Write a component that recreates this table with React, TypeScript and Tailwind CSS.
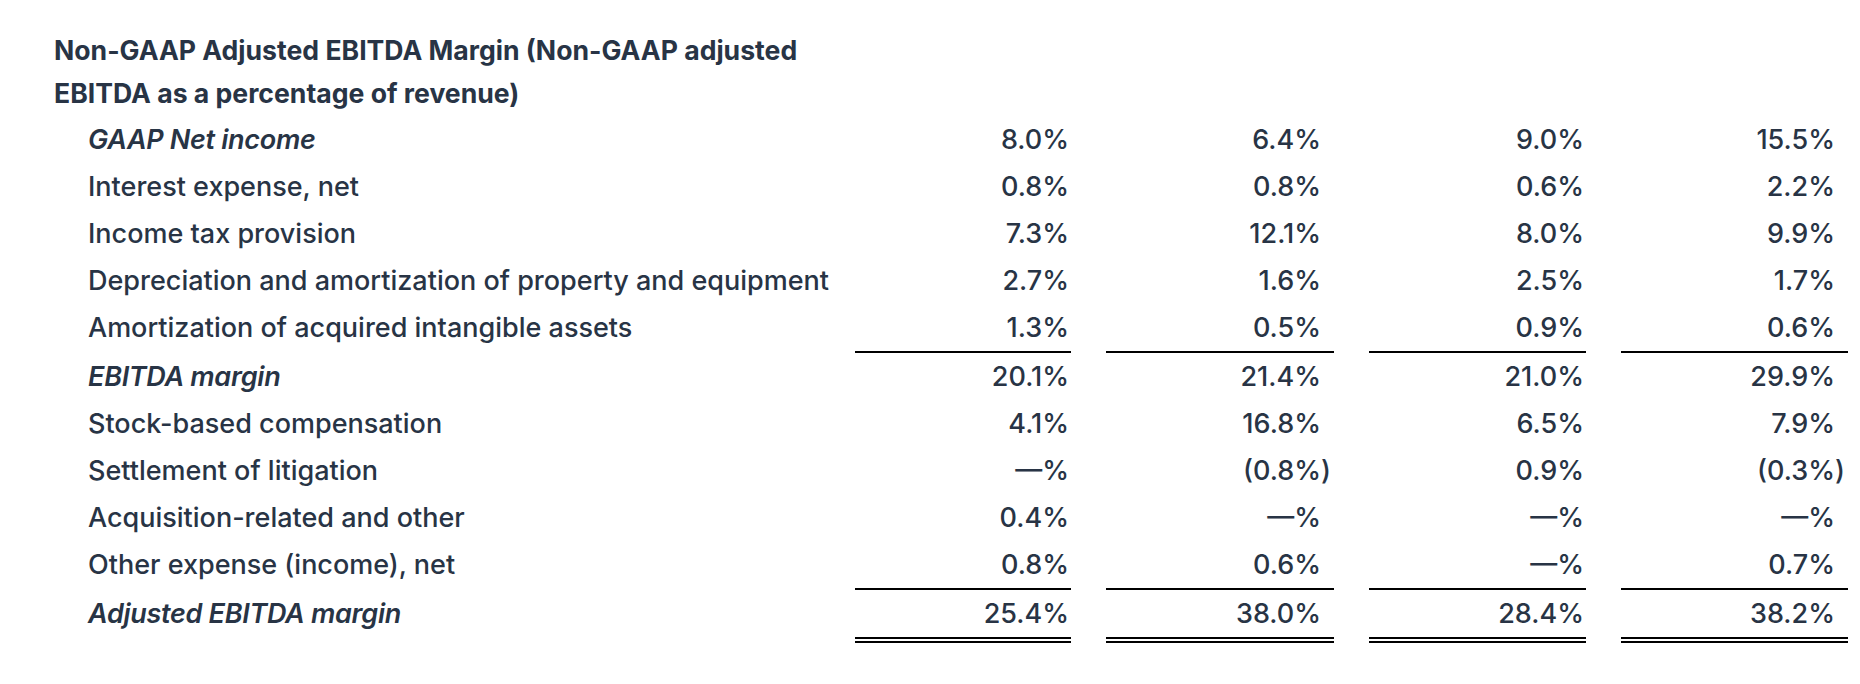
type Row = {
  label: string
  strong?: boolean
  ruled?: boolean
  doubled?: boolean
  values: string[]
}

const rows: Row[] = [
  { label: "GAAP Net income", strong: true, values: ["8.0%", "6.4%", "9.0%", "15.5%"] },
  { label: "Interest expense, net", values: ["0.8%", "0.8%", "0.6%", "2.2%"] },
  { label: "Income tax provision", values: ["7.3%", "12.1%", "8.0%", "9.9%"] },
  {
    label: "Depreciation and amortization of property and equipment",
    values: ["2.7%", "1.6%", "2.5%", "1.7%"],
  },
  { label: "Amortization of acquired intangible assets", values: ["1.3%", "0.5%", "0.9%", "0.6%"] },
  { label: "EBITDA margin", strong: true, ruled: true, values: ["20.1%", "21.4%", "21.0%", "29.9%"] },
  { label: "Stock-based compensation", values: ["4.1%", "16.8%", "6.5%", "7.9%"] },
  { label: "Settlement of litigation", values: ["—%", "(0.8%)", "0.9%", "(0.3%)"] },
  { label: "Acquisition-related and other", values: ["0.4%", "—%", "—%", "—%"] },
  { label: "Other expense (income), net", values: ["0.8%", "0.6%", "—%", "0.7%"] },
  {
    label: "Adjusted EBITDA margin",
    strong: true,
    ruled: true,
    doubled: true,
    values: ["25.4%", "38.0%", "28.4%", "38.2%"],
  },
]

// column widths / spacing measured off the statement layout
const cols = [
  { width: "w-[216px]", space: "", paren: false },
  { width: "w-[228px]", space: "ml-[35px]", paren: true },
  { width: "w-[217px]", space: "ml-[35px]", paren: false },
  { width: "w-[227px]", space: "ml-[35px]", paren: true },
]

function Cell({ value, col, row }: { value: string; col: (typeof cols)[number]; row: Row }) {
  const closes = value.endsWith(")")
  const main = closes ? value.slice(0, -1) : value

  let edge = "h-[47px]"
  if (row.ruled && row.doubled) edge = "h-[55px] border-t-2 border-b-[6px] border-b-black border-double border-t-black"
  else if (row.ruled) edge = "h-[49px] border-t-2 border-black"

  return (
    <div className={`${col.width} ${col.space} ${edge} flex justify-end pt-[1px] pr-[2px]`}>
      <span>{main}</span>
      {col.paren && <span className="w-[11px] text-left">{closes ? ")" : ""}</span>}
    </div>
  )
}

export default function App() {
  return (
    <div
      className="min-h-screen w-[1860px] bg-white pt-[29px] text-[27px] font-medium text-[#283445]"
      style={{ fontFamily: "Inter, 'Liberation Sans', sans-serif" }}
    >
      <h2 className="w-[855px] pl-[54px] text-[26.6px] font-bold leading-[43.4px]">
        Non-GAAP Adjusted EBITDA Margin (Non-GAAP adjusted
        <br />
        EBITDA as a percentage of revenue)
      </h2>

      <div className="flex flex-col">
        {rows.map((row) => (
          <div key={row.label} className="flex leading-[46px]">
            <div
              className={`w-[855px] pl-[88px] ${row.ruled ? "pt-[3px]" : "pt-[1px]"} ${
                row.strong ? "font-semibold italic tracking-[-0.3px]" : ""
              }`}
            >
              {row.label}
            </div>
            {row.values.map((v, i) => (
              <Cell key={i} value={v} col={cols[i]} row={row} />
            ))}
          </div>
        ))}
      </div>
    </div>
  )
}
